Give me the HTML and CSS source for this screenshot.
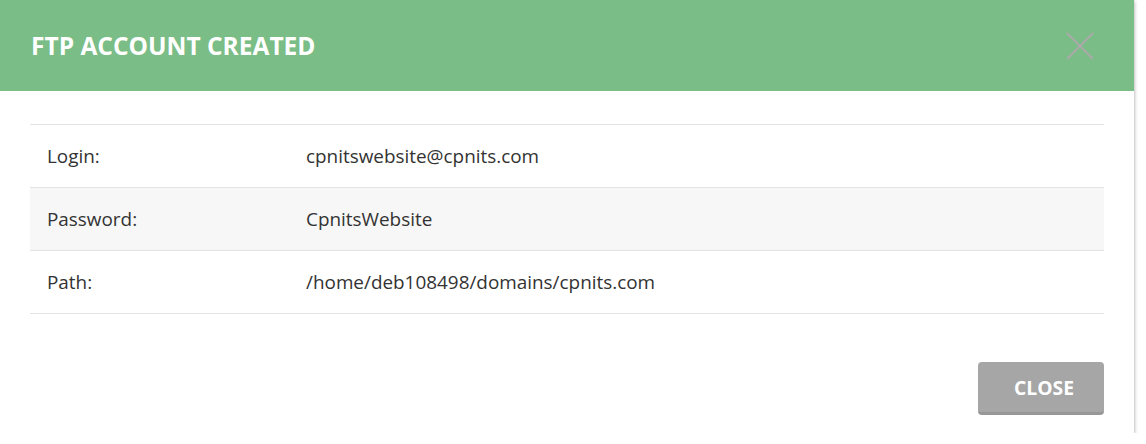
FILE: index.html
```html
<!DOCTYPE html>
<html>
<head>
<meta charset="utf-8">
<link rel="stylesheet" href="styles.css">
</head>
<body>
<div class="modal">
  <div class="modal-header">
    <h1 class="modal-title">FTP ACCOUNT CREATED</h1>
    <button class="modal-x" aria-label="Close">
      <svg width="30" height="30" viewBox="0 0 30 30"><path d="M2 2 L28 28 M28 2 L2 28" stroke="#aaaaaa" stroke-width="2" fill="none"/></svg>
    </button>
  </div>
  <div class="modal-body">
    <table class="info">
      <tr><td class="label">Login:</td><td>cpnitswebsite@cpnits.com</td></tr>
      <tr class="alt"><td class="label">Password:</td><td>CpnitsWebsite</td></tr>
      <tr><td class="label">Path:</td><td>/home/deb108498/domains/cpnits.com</td></tr>
    </table>
  </div>
  <div class="modal-footer">
    <button class="btn-close">CLOSE</button>
  </div>
</div>
</body>
</html>
```

FILE: styles.css
```css
html, body {
  margin: 0;
  padding: 0;
  background: #ffffff;
}
body {
  font-family: "Open Sans", "Liberation Sans", sans-serif;
  color: #333333;
}
.modal {
  width: 1134px;
  height: 433px;
  background: #ffffff;
  box-shadow: 0 1px 4px rgba(0,0,0,0.4);
  display: flex;
  flex-direction: column;
}
.modal-header {
  height: 91px;
  background: #7abd86;
  display: flex;
  align-items: center;
  justify-content: space-between;
  padding: 0 39px 0 31px;
  box-sizing: border-box;
}
.modal-title {
  margin: 0;
  color: #ffffff;
  font-size: 24.5px;
  font-weight: 700;
  letter-spacing: 0;
}
.modal-x {
  background: none;
  border: none;
  padding: 0;
  width: 30px;
  height: 30px;
}
.modal-x svg { display: block; }
.modal-body {
  padding: 33px 30px 0 30px;
}
.info {
  width: 100%;
  border-collapse: collapse;
  font-size: 18.9px;
  border-top: 1px solid #e3e3e3;
}
.info tr {
  height: 63px;
  border-bottom: 1px solid #e3e3e3;
}
.info tr.alt { background: #f7f7f7; }
.info td {
  padding: 0;
  vertical-align: middle;
}
.info td.label {
  width: 276px;
  padding-left: 17px;
  box-sizing: border-box;
}
.modal-footer {
  display: flex;
  justify-content: flex-end;
  padding: 48px 30px 0 30px;
}
.btn-close {
  width: 126px;
  height: 53px;
  background: #a6a6a6;
  border: none;
  border-bottom: 3px solid #979797;
  border-radius: 4px;
  color: #ffffff;
  font-family: "Open Sans", "Liberation Sans", sans-serif;
  font-weight: 700;
  font-size: 19.3px;
  padding: 0 0 0 6px;
}
```
